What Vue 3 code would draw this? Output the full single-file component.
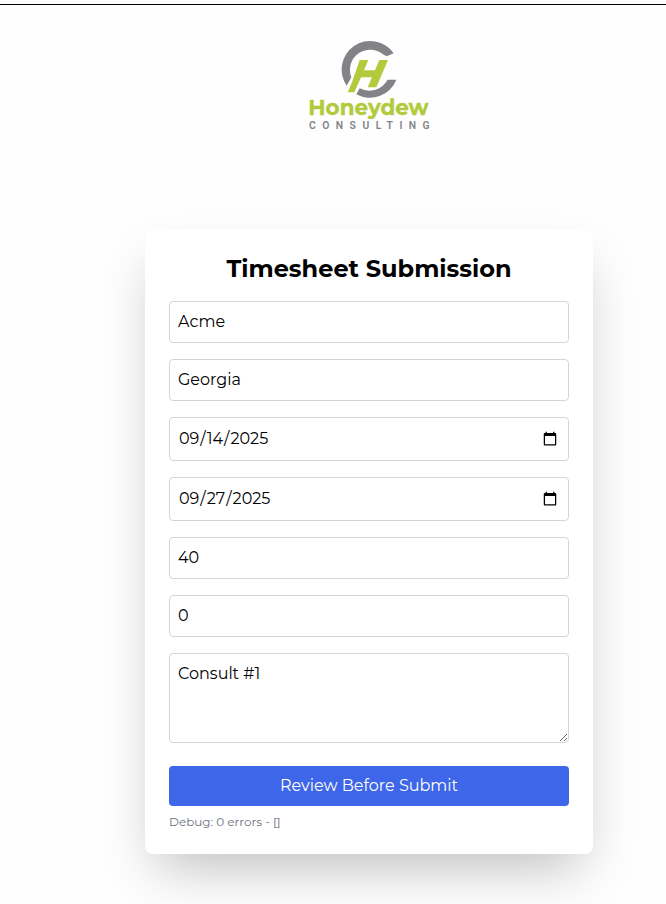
<script setup>
import { ref } from 'vue'

const client = ref('Acme')
const state = ref('Georgia')
const start = ref('2025-09-14')
const end = ref('2025-09-27')
const hours = ref('40')
const overtime = ref('0')
const notes = ref('Consult #1')
const errors = ref([])
</script>

<template>
  <main class="page">
    <header class="brand">
      <svg class="logo" width="140" height="110" viewBox="0 0 420 330" role="img" aria-label="Honeydew Consulting">
        <path fill="#828386" d="M281 70A85 85 0 1 0 140 167L154 142A61 61 0 0 1 251 74L260 79ZM289 149A85 85 0 0 1 169 193L179 175A62 62 0 0 0 256 159L263 149Z" />
        <path fill="#b1cb3c" d="M179 90H205L192 121H225L238 90H264L229 172H203L216 142H183L163 187H143L156 157Z" />
        <text class="logo-name" x="25" y="256" textLength="361" lengthAdjust="spacingAndGlyphs">Honeydew</text>
        <text class="logo-sub" x="27" y="297" textLength="362">CONSULTING</text>
      </svg>
    </header>

    <form class="card" @submit.prevent>
      <h1 class="title">Timesheet Submission</h1>
      <input v-model="client" class="field line" type="text" />
      <input v-model="state" class="field line" type="text" />
      <input v-model="start" class="field date" type="date" />
      <input v-model="end" class="field date" type="date" />
      <input v-model="hours" class="field line" type="number" />
      <input v-model="overtime" class="field line" type="number" />
      <textarea v-model="notes" class="field notes"></textarea>
      <button class="submit" type="submit">Review Before Submit</button>
      <p class="debug">Debug: {{ errors.length }} errors - {{ JSON.stringify(errors) }}</p>
    </form>
  </main>
</template>

<style>
body {
  background: #fefefe;
  overflow: hidden;
}
</style>

<style scoped>
.page {
  box-sizing: border-box;
  height: 904px;
  margin-top: 4px;
  border-top: 1px solid #000;
  font-family: Montserrat, Inter, sans-serif;
  color: #000;
}
.brand {
  display: flex;
  height: 224px;
  padding: 25px 0 0 300px;
  box-sizing: border-box;
}
.logo {
  display: block;
}
.logo-name {
  font-size: 65px;
  font-weight: 700;
  fill: #b1cb3c;
  stroke: #b1cb3c;
  stroke-width: 1px;
}
.logo-sub {
  font-family: Roboto, sans-serif;
  font-size: 31px;
  font-weight: 600;
  fill: #828386;
}
.card {
  box-sizing: border-box;
  display: flex;
  flex-direction: column;
  gap: 16px;
  width: 448px;
  height: 625px;
  margin-left: 145px;
  padding: 24px;
  border-radius: 8px;
  background: #fff;
  box-shadow: 0 25px 50px -12px rgba(0, 0, 0, 0.25);
}
.title {
  margin: 0;
  height: 32px;
  font-size: 24px;
  line-height: 32px;
  font-weight: 700;
  text-align: center;
}
.field {
  box-sizing: border-box;
  flex: none;
  width: 100%;
  height: 42px;
  margin: 0;
  padding: 8px;
  border: 1px solid #d1d5db;
  border-radius: 4px;
  outline: none;
  background: #fff;
  color: #000;
  font: 400 16px/24px Montserrat, Inter, sans-serif;
}
.line {
  padding: 7px 8px 9px;
}
.date {
  height: 44px;
}
.notes {
  height: 90px;
  resize: vertical;
}
.submit {
  flex: none;
  height: 40px;
  margin: 7px 0 0;
  padding: 0;
  border: 0;
  border-radius: 4px;
  background: #3d66e8;
  color: #fff;
  font: 400 16px/24px Montserrat, Inter, sans-serif;
}
.debug {
  margin: -8px 0 0;
  color: #6b7280;
  font-size: 12px;
  line-height: 16px;
}
</style>
